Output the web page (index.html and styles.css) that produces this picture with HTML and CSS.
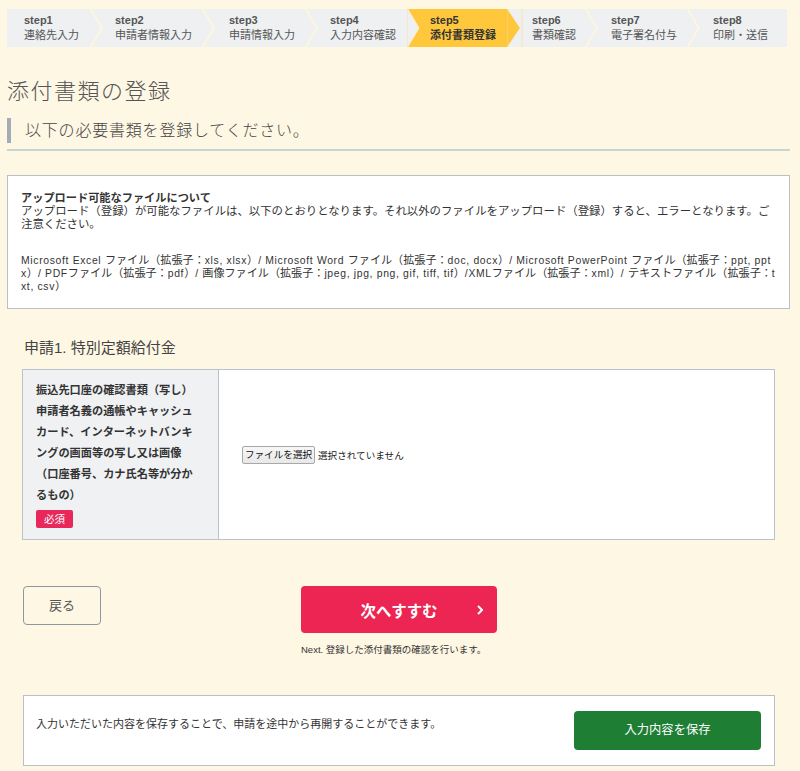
FILE: index.html
```html
<!DOCTYPE html>
<html lang="ja">
<head>
<meta charset="utf-8">
<title>添付書類の登録</title>
<link rel="stylesheet" href="styles.css">
</head>
<body>
<div class="page">
  <nav class="steps">
    <div class="step s1"><span class="num">step1</span><span class="lbl">連絡先入力</span></div>
    <svg class="sep" width="13" height="39" viewBox="0 0 13 39"><polyline points="0,-1 12,19.5 0,40" fill="none" stroke="#fdf5df" stroke-width="2"/></svg>
    <div class="step s2"><span class="num">step2</span><span class="lbl">申請者情報入力</span></div>
    <svg class="sep" width="13" height="39" viewBox="0 0 13 39"><polyline points="0,-1 12,19.5 0,40" fill="none" stroke="#fdf5df" stroke-width="2"/></svg>
    <div class="step s3"><span class="num">step3</span><span class="lbl">申請情報入力</span></div>
    <svg class="sep" width="13" height="39" viewBox="0 0 13 39"><polyline points="0,-1 12,19.5 0,40" fill="none" stroke="#fdf5df" stroke-width="2"/></svg>
    <div class="step s4"><span class="num">step4</span><span class="lbl">入力内容確認</span></div>
    <svg class="sep sep-in" width="13" height="39" viewBox="0 0 13 39"><polygon points="0,0 12,19.5 0,39" fill="#eef0f2"/><polyline points="0,-1 12,19.5 0,40" fill="none" stroke="#fdf5df" stroke-width="1"/></svg>
    <div class="step s5 current"><span class="num">step5</span><span class="lbl">添付書類登録</span></div>
    <svg class="sep sep-out" width="16" height="39" viewBox="0 0 16 39"><polygon points="0,0 13,19.5 0,39" fill="#ffc73c"/><rect x="14.5" y="0" width="1.5" height="39" fill="#fbe6bd"/></svg>
    <div class="step s6"><span class="num">step6</span><span class="lbl">書類確認</span></div>
    <svg class="sep" width="13" height="39" viewBox="0 0 13 39"><polyline points="0,-1 12,19.5 0,40" fill="none" stroke="#fdf5df" stroke-width="2"/></svg>
    <div class="step s7"><span class="num">step7</span><span class="lbl">電子署名付与</span></div>
    <svg class="sep" width="13" height="39" viewBox="0 0 13 39"><polyline points="0,-1 12,19.5 0,40" fill="none" stroke="#fdf5df" stroke-width="2"/></svg>
    <div class="step s8"><span class="num">step8</span><span class="lbl">印刷・送信</span></div>
  </nav>

  <h1 class="title">添付書類の登録</h1>
  <div class="lead-wrap"><h2 class="lead">以下の必要書類を登録してください。</h2></div>

  <section class="info">
    <p class="info-head">アップロード可能なファイルについて</p>
    <p class="info-text">アップロード（登録）が可能なファイルは、以下のとおりとなります。それ以外のファイルをアップロード（登録）すると、エラーとなります。ご注意ください。</p>
    <p class="info-list"><span class="en">Microsoft Excel </span>ファイル（拡張子：<span class="en">xls, xlsx</span>）<span class="en">/ Microsoft Word </span>ファイル（拡張子：<span class="en">doc, docx</span>）<span class="en">/ Microsoft PowerPoint </span>ファイル（拡張子：<span class="en">ppt, pptx</span>）<span class="en">/ PDF</span>ファイル（拡張子：<span class="en">pdf</span>）<span class="en">/ </span>画像ファイル（拡張子：<span class="en">jpeg, jpg, png, gif, tiff, tif</span>）<span class="en">/XML</span>ファイル（拡張子：<span class="en">xml</span>）<span class="en">/ </span>テキストファイル（拡張子：<span class="en">txt, csv</span>）</p>
  </section>

  <section class="apply">
    <h3 class="apply-head">申請1. 特別定額給付金</h3>
    <table class="doc-table">
      <tr>
        <th class="doc-name">
          <span class="doc-text">振込先口座の確認書類（写し）<br>申請者名義の通帳やキャッシュカード、インターネットバンキングの画面等の写し又は画像（口座番号、カナ氏名等が分かるもの）</span>
          <span class="badge">必須</span>
        </th>
        <td class="doc-file">
          <span class="file-btn">ファイルを選択</span><span class="file-none">選択されていません</span>
        </td>
      </tr>
    </table>

    <div class="actions">
      <div class="back-col"><a class="btn-back">戻る</a></div>
      <div class="next-col">
        <a class="btn-next"><span></span><span class="next-label">次へすすむ</span><svg class="chev" width="6" height="10" viewBox="0 0 6 10"><polyline points="1,1 5,5 1,9" fill="none" stroke="#fff" stroke-width="2"/></svg></a>
        <p class="next-note">Next. 登録した添付書類の確認を行います。</p>
      </div>
      <div></div>
    </div>

    <div class="save-box">
      <p class="save-text">入力いただいた内容を保存することで、申請を途中から再開することができます。</p>
      <a class="btn-save">入力内容を保存</a>
    </div>
  </section>
</div>
</body>
</html>
```

FILE: styles.css
```css
* { box-sizing: border-box; }

body {
  margin: 0;
  background: #fef7e4;
  font-family: "Liberation Sans", "Noto Sans CJK JP", sans-serif;
  color: #333;
}

.page {
  width: 790px;
  padding: 9px 0 20px 7px;
}

/* step bar */
.steps {
  display: flex;
  width: 780px;
  height: 38px;
}

.step {
  display: flex;
  flex-direction: column;
  justify-content: center;
  height: 38px;
  background: #eef0f2;
  color: #555;
  font-size: 11px;
  line-height: 15px;
  white-space: nowrap;
}

.step .num {
  font-weight: bold;
}

.s1 { width: 83px; padding-left: 17px; }
.s2 { width: 99px; padding-left: 12px; }
.s3 { width: 90px; padding-left: 14px; }
.s4 { width: 89px; padding-left: 12px; }
.s5 { width: 87px; padding-left: 10px; }
.s6 { width: 62px; padding-left: 9px; }
.s7 { width: 89px; padding-left: 13px; }
.s8 { flex: 1; padding-left: 13px; }

.step.current {
  background: #ffc73c;
  color: #333;
}

.step.current .lbl {
  font-weight: bold;
}

.sep {
  display: block;
  flex: none;
  height: 38px;
  background: #eef0f2;
}

.sep-in {
  background: #ffc73c;
}

.sep-out {
  background: #eef0f2;
}

/* headings */
.title {
  margin: 30px 0 0;
  font-size: 22px;
  line-height: 30px;
  letter-spacing: 1.5px;
  font-weight: 300;
  color: #555;
}

.lead-wrap {
  margin-top: 11px;
  padding-bottom: 6px;
  border-bottom: 2px solid #c9d3cf;
}

.lead {
  margin: 0;
  height: 25px;
  border-left: 4px solid #a3adb5;
  padding-left: 14px;
  font-size: 16px;
  line-height: 25px;
  letter-spacing: 0.8px;
  font-weight: 300;
  color: #444;
}

/* info box */
.info {
  margin-top: 24px;
  background: #fff;
  border: 1px solid #b9c1c7;
  padding: 16px 13px 15px;
}

.info p {
  margin: 0;
  line-height: 13px;
  color: #333;
}

.info-head {
  font-size: 11.2px;
  font-weight: bold;
}

.info-text {
  font-size: 11.4px;
}

.info .info-list {
  margin-top: 23px;
  font-size: 11.1px;
  word-break: break-all;
}

.info-list .en {
  font-size: 10.4px;
  letter-spacing: 0.66px;
}

/* application section */
.apply {
  padding: 0 15px;
}

.apply-head {
  margin: 29px 0 0 2px;
  font-size: 15px;
  line-height: 20px;
  font-weight: normal;
  color: #444;
}

.doc-table {
  margin-top: 11px;
  width: 100%;
  border-collapse: collapse;
  background: #fff;
}

.doc-table th,
.doc-table td {
  border: 1px solid #b8c4cc;
  vertical-align: middle;
}

.doc-name {
  width: 196px;
  background: #eff1f3;
  text-align: left;
  padding: 10px 21px 9px 13px;
  font-size: 11.2px;
  line-height: 21px;
  font-weight: bold;
  color: #333;
}

.doc-text {
  display: block;
}

.badge {
  display: inline-block;
  margin-top: 4px;
  width: 37px;
  height: 18px;
  background: #e8285a;
  color: #fff;
  border-radius: 2px;
  font-size: 10.5px;
  line-height: 18px;
  text-align: center;
  font-weight: normal;
}

.doc-file {
  padding-left: 23px;
  font-size: 10.5px;
  color: #222;
  white-space: nowrap;
}

.file-btn {
  display: inline-block;
  height: 18px;
  width: 73px;
  line-height: 16px;
  text-align: center;
  border: 1px solid #a8a8a8;
  border-radius: 2px;
  background: linear-gradient(#f7f7f7, #e8e8e8);
  color: #111;
  font-size: 9.6px;
  white-space: nowrap;
  vertical-align: middle;
}

.file-none {
  margin-left: 3px;
  vertical-align: middle;
  font-size: 9.6px;
}

/* actions */
.actions {
  display: grid;
  grid-template-columns: 1fr 196px 1fr;
  margin: 46px -15px 0;
  padding: 0 0 0 1px;
}

.back-col {
  padding-left: 15px;
}

.btn-back {
  display: block;
  width: 78px;
  height: 39px;
  border: 1px solid #8a979f;
  border-radius: 4px;
  text-align: center;
  line-height: 37px;
  font-size: 13px;
  color: #555;
}

.next-col {
  display: flex;
  flex-direction: column;
}

.btn-next {
  display: grid;
  grid-template-columns: 1fr auto 1fr;
  align-items: center;
  height: 47px;
  padding-right: 14px;
  background: #ec2553;
  border-radius: 4px;
  color: #fff;
}

.next-label {
  font-size: 15.4px;
  font-weight: bold;
  padding-left: 14px;
}

.chev {
  justify-self: end;
  display: block;
}

.next-note {
  margin: 11px 0 0;
  font-size: 9.5px;
  line-height: 12px;
  color: #333;
  white-space: nowrap;
}

/* save box */
.save-box {
  display: flex;
  justify-content: space-between;
  align-items: flex-start;
  margin: 39px 0 0 1px;
  padding: 15px 13px 15px 12px;
  border: 1px solid #b9c1c7;
  background: #fff;
}

.save-text {
  margin: 5px 0 0;
  font-size: 11px;
  line-height: 16px;
  color: #333;
}

.btn-save {
  display: block;
  width: 187px;
  height: 39px;
  line-height: 39px;
  text-align: center;
  background: #1e7e34;
  border-radius: 4px;
  color: #fff;
  font-size: 12.3px;
}
```
